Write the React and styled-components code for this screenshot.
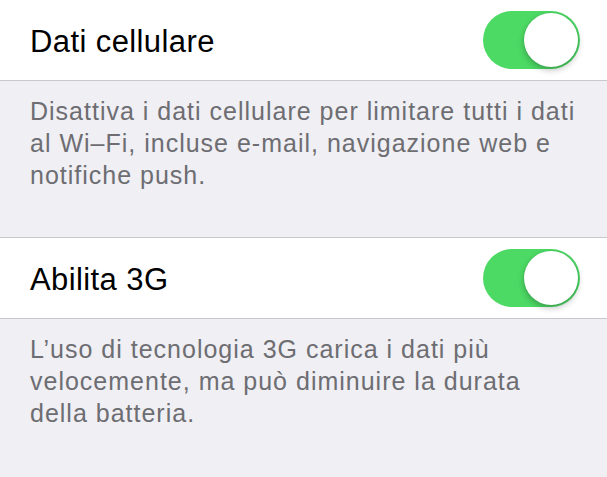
import React from 'react';
import styled, { createGlobalStyle } from 'styled-components';

const GlobalStyle = createGlobalStyle`
  html, body {
    margin: 0;
    padding: 0;
    background: #efeff4;
  }
  body {
    font-family: "Liberation Sans", Arial, sans-serif;
    -webkit-font-smoothing: antialiased;
  }
`;

const Page = styled.div`
  width: 607px;
  height: 477px;
  overflow: hidden;
  background: #efeff4;
`;

const Row = styled.div`
  display: flex;
  align-items: center;
  justify-content: space-between;
  height: 80px;
  padding: 0 27px 0 30px;
  background: #fff;
  border-top: ${props => (props.first ? 'none' : '1px solid #c8c7cc')};
  border-bottom: 1px solid #c8c7cc;
`;

const Label = styled.span`
  font-size: 31px;
  color: #000;
  padding-top: 3px;
  letter-spacing: 0.4px;
`;

const Footer = styled.div`
  height: ${props => props.height}px;
  box-sizing: border-box;
  padding: 14px 24px 0 30px;
  font-size: 25px;
  line-height: 32px;
  color: #6d6d72;
  letter-spacing: 1px;
`;

const Track = styled.div`
  position: relative;
  width: 97px;
  height: 58px;
  border-radius: 29px;
  background: #4cd964;
  flex-shrink: 0;
`;

const Knob = styled.div`
  position: absolute;
  top: 2px;
  right: 2px;
  width: 54px;
  height: 54px;
  border-radius: 50%;
  background: #fff;
  box-shadow: 0 3px 6px rgba(0, 0, 0, 0.25), 0 0 0 1px rgba(0, 0, 0, 0.04);
`;

const Switch = () => (
  <Track>
    <Knob />
  </Track>
);

export default function App() {
  return (
    <Page>
      <GlobalStyle />
      <Row first>
        <Label>Dati cellulare</Label>
        <Switch />
      </Row>
      <Footer height={156}>
        Disattiva i dati cellulare per limitare tutti i dati al Wi–Fi, incluse e-mail, navigazione web e notifiche push.
      </Footer>
      <Row>
        <Label>Abilita 3G</Label>
        <Switch />
      </Row>
      <Footer height={160}>
        L’uso di tecnologia 3G carica i dati più velocemente, ma può diminuire la durata della batteria.
      </Footer>
    </Page>
  );
}
